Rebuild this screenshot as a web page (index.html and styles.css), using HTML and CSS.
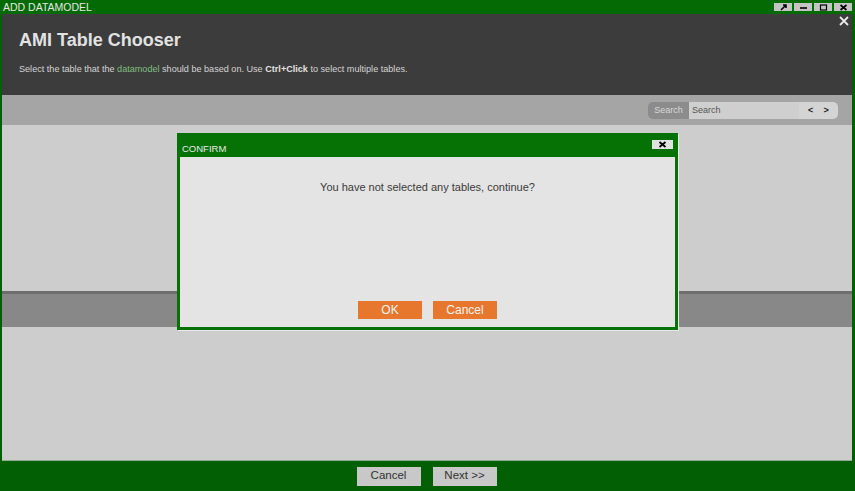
FILE: index.html
```html
<!DOCTYPE html>
<html>
<head>
<meta charset="utf-8">
<link rel="stylesheet" href="styles.css">
</head>
<body>
<div class="window">
  <div class="titlebar">
    <span class="wtitle">ADD DATAMODEL</span>
    <div class="wbtns">
      <span class="wbtn"><svg width="9" height="7" viewBox="0 0 9 7"><path d="M2 6L7 1M4 1h3v3" stroke="#000" stroke-width="1.6" fill="none"/></svg></span>
      <span class="wbtn"><svg width="9" height="7" viewBox="0 0 9 7"><path d="M1 4h7" stroke="#000" stroke-width="1.6"/></svg></span>
      <span class="wbtn"><svg width="9" height="7" viewBox="0 0 9 7"><rect x="1.5" y="1" width="6" height="5" stroke="#000" stroke-width="1.2" fill="none"/></svg></span>
      <span class="wbtn"><svg width="9" height="7" viewBox="0 0 9 7"><path d="M1.5 1l6 5M7.5 1l-6 5" stroke="#000" stroke-width="1.7"/></svg></span>
    </div>
  </div>
  <div class="frame">
    <div class="header">
      <h1 class="title">AMI Table Chooser</h1>
      <p class="subtitle">Select the table that the <span class="hl">datamodel</span> should be based on. Use <b>Ctrl+Click</b> to select multiple tables.</p>
      <svg class="hclose" width="10" height="10" viewBox="0 0 10 10"><path d="M1 1l8 8M9 1l-8 8" stroke="#e8e8e8" stroke-width="1.8"/></svg>
    </div>
    <div class="toolbar">
      <div class="search">
        <span class="slabel">Search</span>
        <span class="sinput">Search</span>
        <span class="snav"><span>&lt;</span><span>&gt;</span></span>
      </div>
    </div>
    <div class="content">
      <div class="panel-top"></div>
      <div class="band"></div>
      <div class="panel-bottom"></div>
    </div>
  </div>
  <div class="footer">
    <button class="fbtn">Cancel</button>
    <button class="fbtn">Next &gt;&gt;</button>
  </div>

  <div class="dialog">
    <div class="dhead">
      <span class="dtitle">CONFIRM</span>
      <span class="dclose"><svg width="9" height="7" viewBox="0 0 9 7"><path d="M1.5 1l6 5M7.5 1l-6 5" stroke="#000" stroke-width="1.8"/></svg></span>
    </div>
    <div class="dbody">
      <p class="dmsg">You have not selected any tables, continue?</p>
      <div class="dbtns">
        <button class="obtn">OK</button>
        <button class="obtn">Cancel</button>
      </div>
    </div>
  </div>
</div>
</body>
</html>
```

FILE: styles.css
```css
* { box-sizing: border-box; }
html, body { margin: 0; padding: 0; }
body {
  width: 855px;
  height: 491px;
  overflow: hidden;
  font-family: "Liberation Sans", Arial, sans-serif;
}
.window {
  position: relative;
  width: 855px;
  height: 491px;
  display: flex;
  flex-direction: column;
  background: #035f03;
}
.titlebar {
  height: 14px;
  background: #046a04;
  display: flex;
  align-items: center;
  justify-content: space-between;
  padding: 0 3px 0 3px;
}
.wtitle {
  color: #e6e6e6;
  font-size: 10.5px;
  line-height: 14px;
}
.wbtns {
  display: flex;
  gap: 2px;
}
.wbtn {
  width: 18px;
  height: 8px;
  background: #c4c4c4;
  display: flex;
  align-items: center;
  justify-content: center;
}
.frame {
  flex: 1;
  margin: 0 3px 0 2px;
  display: flex;
  flex-direction: column;
  background: #cdcdcd;
}
.header {
  position: relative;
  height: 81px;
  background: #3c3c3c;
  padding: 15px 17px 0;
}
.title {
  margin: 0;
  color: #e2e2e2;
  font-size: 18px;
  font-weight: bold;
  line-height: 22px;
}
.subtitle {
  margin: 12px 0 0;
  color: #d4d4d4;
  font-size: 9.1px;
  line-height: 12px;
}
.subtitle b { color: #e2e2e2; }
.hl { color: #7fbf7f; }
.hclose {
  position: absolute;
  right: 3px;
  top: 2px;
}
.toolbar {
  height: 30px;
  background: #a5a5a5;
  display: flex;
  align-items: center;
  justify-content: flex-end;
  padding-right: 14px;
}
.search {
  display: flex;
  height: 17px;
  border-radius: 5px;
  overflow: hidden;
  margin-top: 1px;
  font-size: 9px;
  line-height: 17px;
}
.slabel {
  width: 41px;
  background: #8c8c8c;
  color: #d8d8d8;
  text-align: center;
}
.sinput {
  width: 110px;
  background: #cfcfcf;
  color: #555;
  padding-left: 3px;
}
.snav {
  width: 39px;
  background: #d4d4d4;
  display: flex;
  justify-content: space-around;
  color: #222;
  font-weight: bold;
  font-size: 9px;
  padding: 0 4px;
}
.content {
  flex: 1;
  display: flex;
  flex-direction: column;
}
.panel-top {
  height: 166px;
  background: #cdcdcd;
}
.band {
  height: 36px;
  background: #888888;
  border-top: 3px solid #6e6e6e;
}
.panel-bottom {
  flex: 1;
  background: #cdcdcd;
  border-bottom: 1px solid #8fae8f;
}
.footer {
  height: 30px;
  display: flex;
  justify-content: center;
  align-items: flex-start;
  padding: 6px 2px 0 0;
  gap: 12px;
}
.fbtn {
  width: 64px;
  height: 19px;
  border: none;
  background: #c8c8c8;
  color: #333;
  font-family: "Liberation Sans", Arial, sans-serif;
  font-size: 11.5px;
  line-height: 17px;
  padding: 0 0 2px;
  margin: 0;
}
.dialog {
  position: absolute;
  left: 177px;
  top: 133px;
  width: 501px;
  height: 197px;
  background: #067206;
  border: 3px solid #067206;
  display: flex;
  flex-direction: column;
  box-shadow: 1px 1px 0 #e8e8e8;
}
.dhead {
  height: 21px;
  display: flex;
  align-items: center;
  justify-content: space-between;
  padding: 0 2px 0 2px;
}
.dtitle {
  color: #e8e8e8;
  font-size: 9.5px;
  margin-top: 3px;
}
.dclose {
  width: 21px;
  height: 9px;
  background: #e2e2e2;
  display: flex;
  align-items: center;
  justify-content: center;
  margin-top: -5px;
}
.dbody {
  flex: 1;
  background: #e4e4e4;
  display: flex;
  flex-direction: column;
  align-items: center;
}
.dmsg {
  margin: 24px 0 0;
  color: #3a3a3a;
  font-size: 11px;
}
.dbtns {
  margin-top: auto;
  margin-bottom: 8px;
  display: flex;
  gap: 11px;
}
.obtn {
  width: 64px;
  height: 18px;
  border: none;
  background: #e8772e;
  color: #f4f4f4;
  font-family: "Liberation Sans", Arial, sans-serif;
  font-size: 12px;
  padding: 0;
  margin: 0;
}
```
